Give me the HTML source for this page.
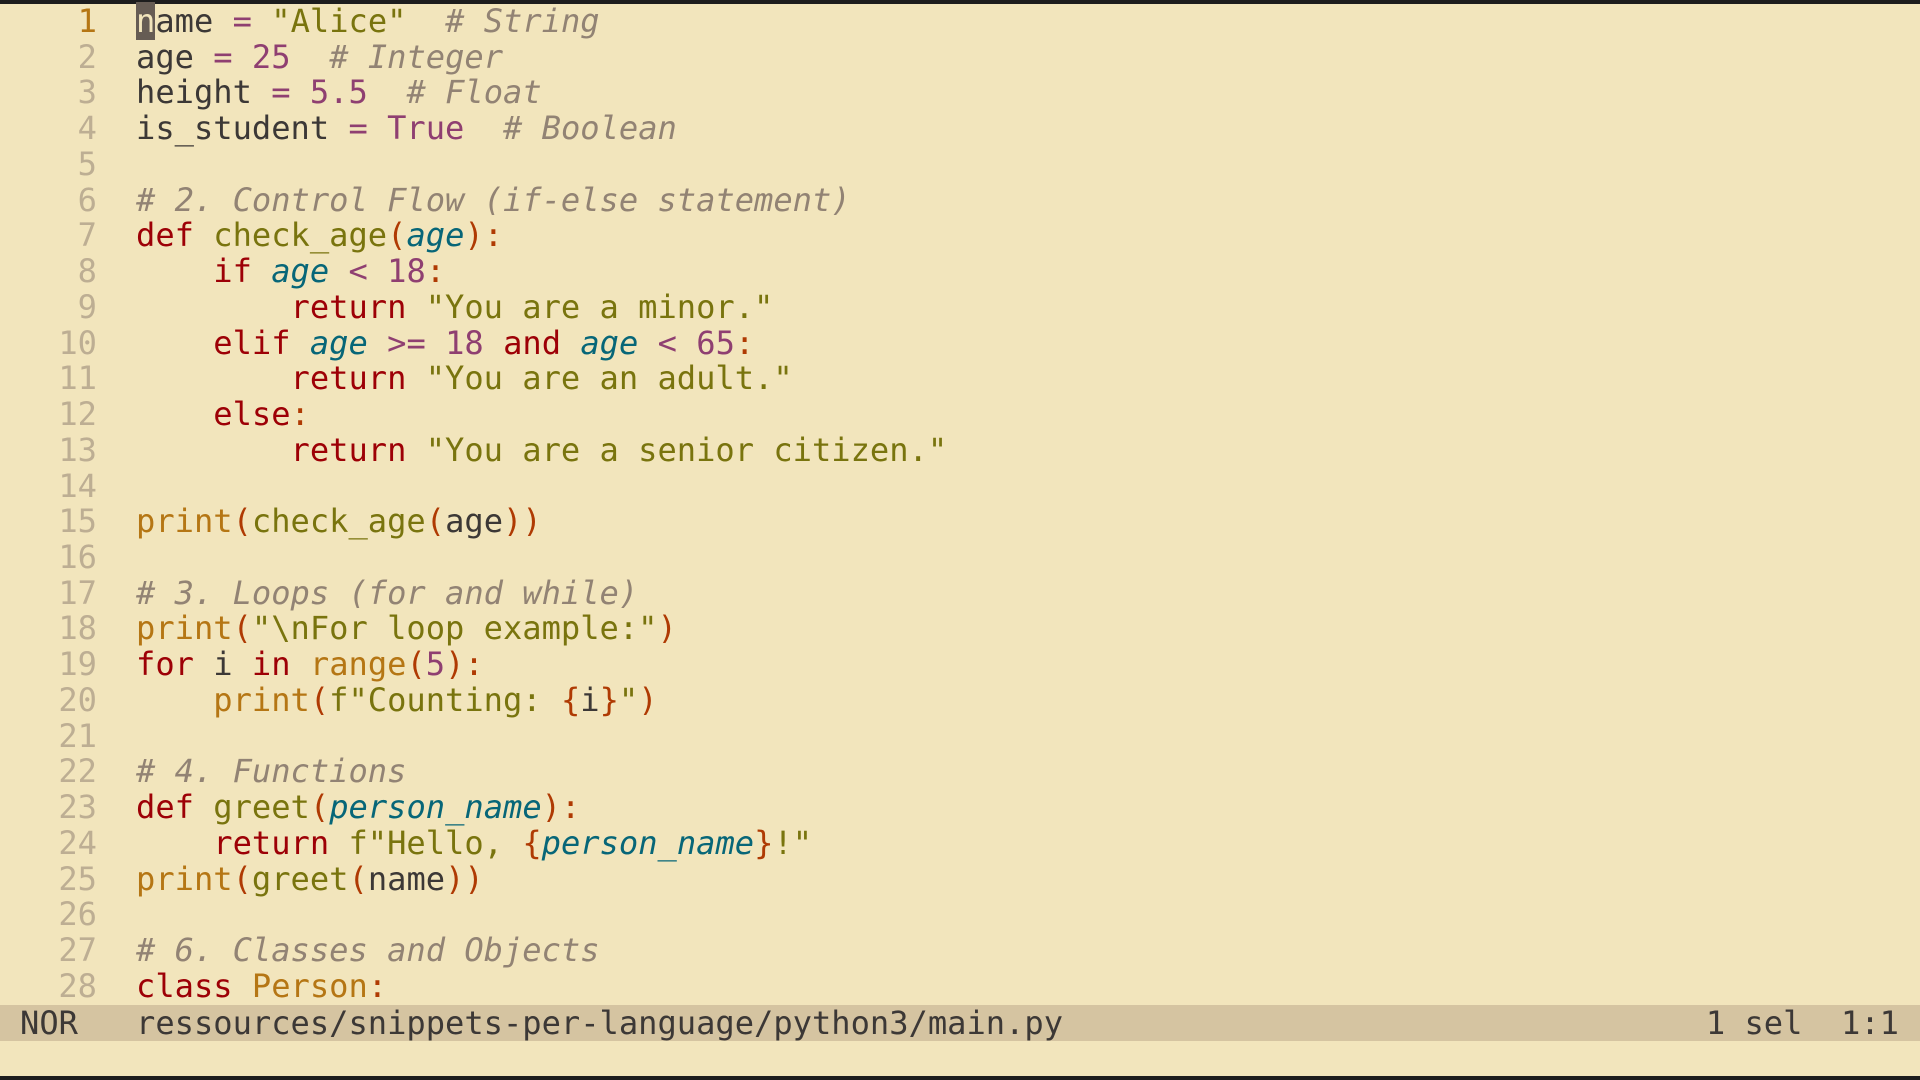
<!DOCTYPE html><html><head><style>
body{margin:0;width:1920px;height:1080px;background:#1d1d1d;overflow:hidden;font-family:"DejaVu Sans Mono","Liberation Mono",monospace;font-size:32.1px}
#ed{position:absolute;top:4px;left:0;width:1920px;height:1072px;background:#f2e5bc}
.l{height:35.74px;line-height:35.74px;white-space:pre;color:#3c3836}
.n{color:#bdae93;display:inline-block;width:97px;text-align:right;margin-right:39px}
.c1{color:#b57614}
.k{color:#9d0006}.s{color:#79740e}.m{color:#8f3f71}.o{color:#8f3f71}
.cm{color:#928374;font-style:italic}.p{color:#076678;font-style:italic}
.f{color:#b57614}.fn{color:#79740e}.b{color:#af3a03}
.cur{background:#665c54;color:#f2e5bc}
#st{position:absolute;top:1005px;left:0;width:1920px;height:36px;line-height:36px;background:#d5c4a1;color:#3c3836;white-space:pre}
</style></head><body><div id="ed">
<div class="l"><span class="n c1">1</span><span class="cur">n</span>ame <span class="o">=</span> <span class="s">"Alice"</span>  <span class="cm"># String</span></div>
<div class="l"><span class="n">2</span>age <span class="o">=</span> <span class="m">25</span>  <span class="cm"># Integer</span></div>
<div class="l"><span class="n">3</span>height <span class="o">=</span> <span class="m">5.5</span>  <span class="cm"># Float</span></div>
<div class="l"><span class="n">4</span>is_student <span class="o">=</span> <span class="m">True</span>  <span class="cm"># Boolean</span></div>
<div class="l"><span class="n">5</span></div>
<div class="l"><span class="n">6</span><span class="cm"># 2. Control Flow (if-else statement)</span></div>
<div class="l"><span class="n">7</span><span class="k">def</span> <span class="fn">check_age</span><span class="b">(</span><span class="p">age</span><span class="b">):</span></div>
<div class="l"><span class="n">8</span>    <span class="k">if</span> <span class="p">age</span> <span class="o">&lt;</span> <span class="m">18</span><span class="b">:</span></div>
<div class="l"><span class="n">9</span>        <span class="k">return</span> <span class="s">"You are a minor."</span></div>
<div class="l"><span class="n">10</span>    <span class="k">elif</span> <span class="p">age</span> <span class="o">&gt;=</span> <span class="m">18</span> <span class="k">and</span> <span class="p">age</span> <span class="o">&lt;</span> <span class="m">65</span><span class="b">:</span></div>
<div class="l"><span class="n">11</span>        <span class="k">return</span> <span class="s">"You are an adult."</span></div>
<div class="l"><span class="n">12</span>    <span class="k">else</span><span class="b">:</span></div>
<div class="l"><span class="n">13</span>        <span class="k">return</span> <span class="s">"You are a senior citizen."</span></div>
<div class="l"><span class="n">14</span></div>
<div class="l"><span class="n">15</span><span class="f">print</span><span class="b">(</span><span class="fn">check_age</span><span class="b">(</span>age<span class="b">))</span></div>
<div class="l"><span class="n">16</span></div>
<div class="l"><span class="n">17</span><span class="cm"># 3. Loops (for and while)</span></div>
<div class="l"><span class="n">18</span><span class="f">print</span><span class="b">(</span><span class="s">"\nFor loop example:"</span><span class="b">)</span></div>
<div class="l"><span class="n">19</span><span class="k">for</span> i <span class="k">in</span> <span class="f">range</span><span class="b">(</span><span class="m">5</span><span class="b">):</span></div>
<div class="l"><span class="n">20</span>    <span class="f">print</span><span class="b">(</span><span class="s">f"Counting: </span><span class="b">{</span>i<span class="b">}</span><span class="s">"</span><span class="b">)</span></div>
<div class="l"><span class="n">21</span></div>
<div class="l"><span class="n">22</span><span class="cm"># 4. Functions</span></div>
<div class="l"><span class="n">23</span><span class="k">def</span> <span class="fn">greet</span><span class="b">(</span><span class="p">person_name</span><span class="b">):</span></div>
<div class="l"><span class="n">24</span>    <span class="k">return</span> <span class="s">f"Hello, </span><span class="b">{</span><span class="p">person_name</span><span class="b">}</span><span class="s">!"</span></div>
<div class="l"><span class="n">25</span><span class="f">print</span><span class="b">(</span><span class="fn">greet</span><span class="b">(</span>name<span class="b">))</span></div>
<div class="l"><span class="n">26</span></div>
<div class="l"><span class="n">27</span><span class="cm"># 6. Classes and Objects</span></div>
<div class="l"><span class="n">28</span><span class="k">class</span> <span class="f">Person</span><span class="b">:</span></div>
</div>
<div id="st"><span style="position:absolute;left:20px">NOR</span><span style="position:absolute;left:136px">ressources/snippets-per-language/python3/main.py</span><span style="position:absolute;right:21px">1 sel  1:1</span></div>
</body></html>
